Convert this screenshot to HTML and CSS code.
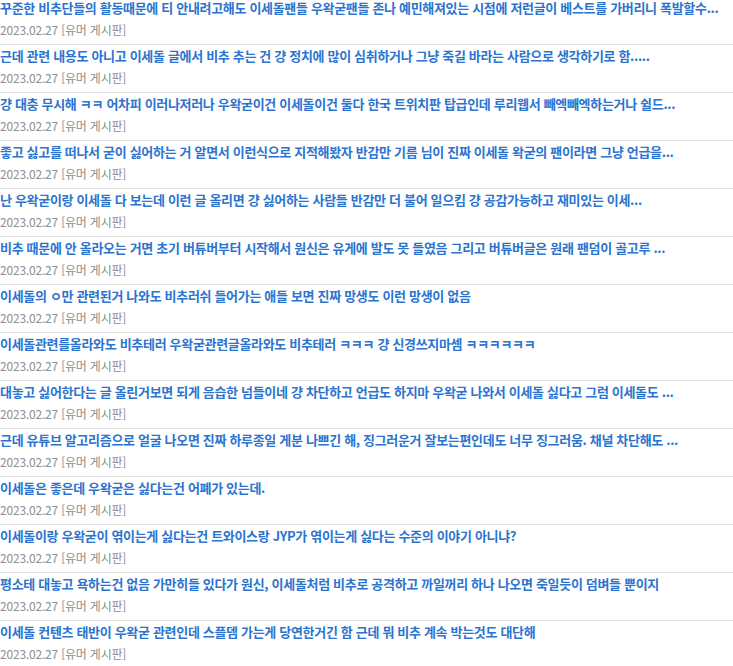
FILE: index.html
```html
<!DOCTYPE html>
<html lang="ko">
<head>
    <meta charset="utf-8">
    <title>관련 게시글</title>
    <link rel="stylesheet" href="styles.css">
</head>
<body>
<ul class="post-list">
    <li class="post">
        <a class="post-title" href="#">꾸준한 비추단들의 활동때문에 티 안내려고해도 이세돌팬들 우왁굳팬들 존나 예민해져있는 시점에 저런글이 베스트를 가버리니 폭발할수...</a>
        <p class="post-meta">2023.02.27 [유머 게시판]</p>
    </li>
    <li class="post">
        <a class="post-title" href="#">근데 관련 내용도 아니고 이세돌 글에서 비추 추는 건 걍 정치에 많이 심취하거나 그냥 죽길 바라는 사람으로 생각하기로 함.....</a>
        <p class="post-meta">2023.02.27 [유머 게시판]</p>
    </li>
    <li class="post">
        <a class="post-title" href="#">걍 대충 무시해 ㅋㅋ 어차피 이러나저러나 우왁굳이건 이세돌이건 둘다 한국 트위치판 탑급인데 루리웹서 빼엑빼엑하는거나 쉴드...</a>
        <p class="post-meta">2023.02.27 [유머 게시판]</p>
    </li>
    <li class="post">
        <a class="post-title" href="#">좋고 싫고를 떠나서 굳이 싫어하는 거 알면서 이런식으로 지적해봤자 반감만 기름 님이 진짜 이세돌 왁굳의 팬이라면 그냥 언급을...</a>
        <p class="post-meta">2023.02.27 [유머 게시판]</p>
    </li>
    <li class="post">
        <a class="post-title" href="#">난 우왁굳이랑 이세돌 다 보는데 이런 글 올리면 걍 싫어하는 사람들 반감만 더 불어 일으킴 걍 공감가능하고 재미있는 이세...</a>
        <p class="post-meta">2023.02.27 [유머 게시판]</p>
    </li>
    <li class="post">
        <a class="post-title" href="#">비추 때문에 안 올라오는 거면 초기 버튜버부터 시작해서 원신은 유게에 발도 못 들였음 그리고 버튜버글은 원래 팬덤이 골고루 ...</a>
        <p class="post-meta">2023.02.27 [유머 게시판]</p>
    </li>
    <li class="post">
        <a class="post-title" href="#">이세돌의 ㅇ만 관련된거 나와도 비추러쉬 들어가는 애들 보면 진짜 망생도 이런 망생이 없음</a>
        <p class="post-meta">2023.02.27 [유머 게시판]</p>
    </li>
    <li class="post">
        <a class="post-title" href="#">이세돌관련를올라와도 비추테러 우왁굳관련글올라와도 비추테러 ㅋㅋㅋ 걍 신경쓰지마셈 ㅋㅋㅋㅋㅋㅋ</a>
        <p class="post-meta">2023.02.27 [유머 게시판]</p>
    </li>
    <li class="post">
        <a class="post-title" href="#">대놓고 싫어한다는 글 올린거보면 되게 음습한 넘들이네 걍 차단하고 언급도 하지마 우왁굳 나와서 이세돌 싫다고 그럼 이세돌도 ...</a>
        <p class="post-meta">2023.02.27 [유머 게시판]</p>
    </li>
    <li class="post">
        <a class="post-title" href="#">근데 유튜브 알고리즘으로 얼굴 나오면 진짜 하루종일 게분 나쁘긴 해, 징그러운거 잘보는편인데도 너무 징그러움. 채널 차단해도 ...</a>
        <p class="post-meta">2023.02.27 [유머 게시판]</p>
    </li>
    <li class="post">
        <a class="post-title" href="#">이세돌은 좋은데 우왁굳은 싫다는건 어폐가 있는데.</a>
        <p class="post-meta">2023.02.27 [유머 게시판]</p>
    </li>
    <li class="post">
        <a class="post-title" href="#">이세돌이랑 우왁굳이 엮이는게 싫다는건 트와이스랑 JYP가 엮이는게 싫다는 수준의 이야기 아니냐?</a>
        <p class="post-meta">2023.02.27 [유머 게시판]</p>
    </li>
    <li class="post">
        <a class="post-title" href="#">평소테 대놓고 욕하는건 없음 가만히들 있다가 원신, 이세돌처럼 비추로 공격하고 까일꺼리 하나 나오면 죽일듯이 덤벼들 뿐이지</a>
        <p class="post-meta">2023.02.27 [유머 게시판]</p>
    </li>
    <li class="post">
        <a class="post-title" href="#">이세돌 컨텐츠 태반이 우왁굳 관련인데 스플뎀 가는게 당연한거긴 함 근데 뭐 비추 계속 박는것도 대단해</a>
        <p class="post-meta">2023.02.27 [유머 게시판]</p>
    </li>
</ul>
</body>
</html>
```

FILE: styles.css
```css
* {
    margin: 0;
    padding: 0;
    box-sizing: border-box;
}

body {
    font-family: "Noto Sans CJK KR", "Noto Sans", sans-serif;
    background-color: #fff;
}

.post-list {
    list-style-type: none;
}

.post {
    padding: 3px 0 6px;
    border-bottom: 1px solid #e3e3e3;
}

.post:first-child {
    padding-top: 0;
}

.post-title {
    display: block;
    font-size: 13px;
    font-weight: bold;
    line-height: 16px;
    letter-spacing: -0.32px;
    color: #2b74cf;
    text-decoration: none;
    white-space: nowrap;
}

.post-meta {
    margin-top: 6px;
    font-size: 12px;
    line-height: 16px;
    letter-spacing: -0.2px;
    color: #8d8d8d;
}
```
